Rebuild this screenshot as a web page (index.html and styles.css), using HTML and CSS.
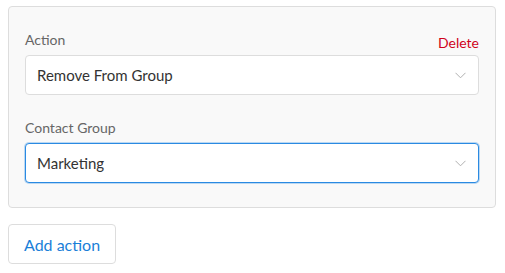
FILE: index.html
```html
<!DOCTYPE html>
<html>
<head>
<meta charset="utf-8">
<link rel="stylesheet" href="styles.css">
</head>
<body>
<div class="panel">
  <div class="field">
    <div class="field-head">
      <span class="label">Action</span>
      <span class="delete">Delete</span>
    </div>
    <div class="select">
      <span class="value">Remove From Group</span>
      <svg class="chev" width="11" height="7" viewBox="0 0 11 7"><path d="M0.5 0.8 L5.5 5.8 L10.5 0.8" fill="none" stroke="#b0b0b0" stroke-width="1"/></svg>
    </div>
  </div>
  <div class="field">
    <div class="field-head">
      <span class="label">Contact Group</span>
    </div>
    <div class="select focused">
      <span class="value">Marketing</span>
      <svg class="chev" width="11" height="7" viewBox="0 0 11 7"><path d="M0.5 0.8 L5.5 5.8 L10.5 0.8" fill="none" stroke="#b0b0b0" stroke-width="1"/></svg>
    </div>
  </div>
</div>
<button class="add-btn">Add action</button>
</body>
</html>
```
FILE: styles.css
```css
html, body { background: #fff; }
body {
  margin: 6px 8px;
  font-family: Lato, "Open Sans", sans-serif;
  width: 488px;
}
.panel {
  background: #f9f9f9;
  border: 1px solid #dddddd;
  border-radius: 4px;
  padding: 23px 16px 24px;
  display: flex;
  flex-direction: column;
  gap: 23px;
}
.field { display: flex; flex-direction: column; }
.field-head {
  display: flex;
  justify-content: space-between;
  align-items: flex-start;
  margin-bottom: 5px;
}
.label {
  font-size: 14px;
  line-height: 20px;
  color: #666;
}
.delete {
  font-size: 14px;
  line-height: 20px;
  color: #d0021b;
  padding-top: 3px;
  margin-bottom: -3px;
}
.select {
  height: 40px;
  box-sizing: border-box;
  background: #fff;
  border: 1px solid #dddddd;
  border-radius: 4px;
  display: flex;
  align-items: center;
  justify-content: space-between;
  padding: 0 12px 0 11px;
}
.select.focused {
  border-color: #2a8ae2;
  box-shadow: 0 0 0 1px rgba(42, 138, 226, 0.3);
}
.value {
  font-size: 15px;
  color: #333;
}
.chev { display: block; margin-top: 1px; }
.add-btn {
  margin-top: 16px;
  height: 40px;
  padding: 0 15px;
  background: #fff;
  border: 1px solid #dddddd;
  border-radius: 4px;
  font-family: Lato, "Open Sans", sans-serif;
  font-size: 16px;
  color: #1a7fd8;
  cursor: pointer;
}
```
